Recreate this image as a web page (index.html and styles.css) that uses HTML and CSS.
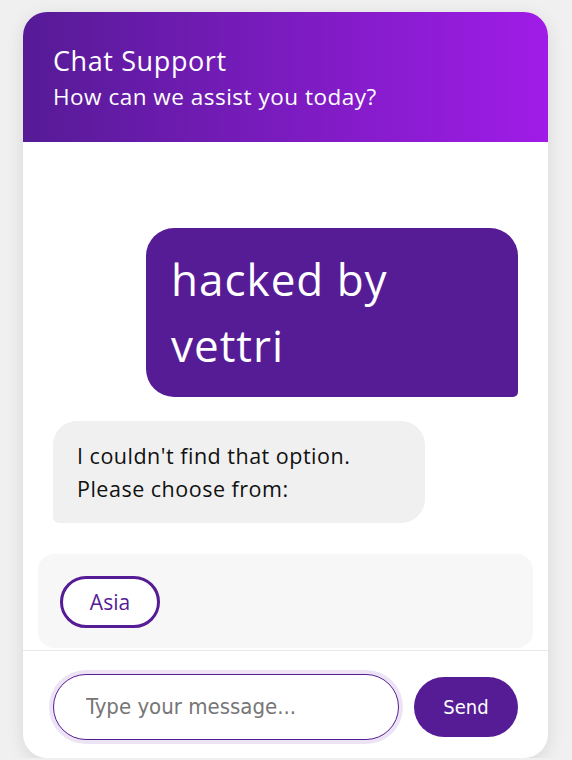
FILE: index.html
```html
<!DOCTYPE html>
<html lang="en">
<head>
<meta charset="utf-8">
<title>Chat Support</title>
<link rel="stylesheet" href="styles.css">
</head>
<body>
<div class="chat">
  <header class="chat-header">
    <h1 class="title">Chat Support</h1>
    <p class="subtitle">How can we assist you today?</p>
  </header>
  <div class="messages">
    <div class="msg user">hacked by vettri</div>
    <div class="msg bot">I couldn't find that option. Please choose from:</div>
  </div>
  <div class="options">
    <button class="option">Asia</button>
  </div>
  <div class="composer">
    <input class="input" type="text" placeholder="Type your message...">
    <button class="send">Send</button>
  </div>
</div>
</body>
</html>
```
FILE: styles.css
```css
* { box-sizing: border-box; }
html, body { margin: 0; padding: 0; }
body {
  background: #f0f0f0;
  padding-top: 12px;
  font-family: "Open Sans", "Noto Sans", sans-serif;
}
.chat {
  width: 525px;
  height: 746px;
  margin: 0 0 0 23px;
  background: #fff;
  border-radius: 24px;
  overflow: hidden;
  display: flex;
  flex-direction: column;
  box-shadow: 0 4px 18px rgba(0,0,0,0.10);
}
.chat-header {
  height: 130px;
  flex: none;
  padding: 31px 30px 0;
  color: #fff;
  background: linear-gradient(90deg, #561b96 0%, #a01ce8 100%);
}
.title {
  margin: 0;
  font-size: 27px;
  font-weight: 400;
  letter-spacing: 0.6px;
  line-height: 36px;
}
.subtitle {
  margin: 0;
  font-size: 22.5px;
  letter-spacing: 0.5px;
  line-height: 35px;
}
.messages {
  flex: 1;
  display: flex;
  flex-direction: column;
  justify-content: flex-end;
  gap: 24px;
  padding: 30px 30px 31px;
}
.msg {
  width: 80%;
}
.user {
  align-self: flex-end;
  background: #561c96;
  color: #fff;
  font-size: 44px;
  letter-spacing: 1px;
  line-height: 66px;
  padding: 18px 25px 19px;
  border-radius: 28px 28px 5px 28px;
}
.bot {
  align-self: flex-start;
  background: #f0f0f0;
  color: #111;
  font-size: 21.5px;
  letter-spacing: 0.5px;
  line-height: 33px;
  padding: 18px 24px 18px;
  border-radius: 24px 24px 24px 6px;
}
.options {
  flex: none;
  margin: 0 15px 2px;
  height: 94px;
  padding: 22px;
  background: #f7f7f7;
  border-radius: 16px;
  display: flex;
  align-items: flex-start;
}
.option {
  height: 52px;
  width: 100px;
  padding: 0;
  border: 3px solid #561c96;
  border-radius: 26px;
  background: #fff;
  color: #561c96;
  font-family: "Open Sans", "Noto Sans", sans-serif;
  font-size: 21px;
}
.composer {
  flex: none;
  border-top: 1px solid #e8e8e8;
  display: flex;
  align-items: center;
  gap: 15px;
  padding: 4px 30px 0;
  height: 108px;
}
.input {
  flex: 1;
  min-width: 0;
  height: 66px;
  border: 1px solid #561c96;
  border-radius: 33px;
  padding: 0 32px;
  font-family: "DejaVu Sans Condensed", "Liberation Sans", sans-serif;
  font-size: 22px;
  color: #222;
  outline: none;
  box-shadow: 0 0 0 4px #ece4f4;
}
.input::placeholder { color: #767676; }
.send {
  flex: none;
  width: 104px;
  height: 60px;
  border: none;
  border-radius: 30px;
  background: #561c96;
  color: #fff;
  font-family: "DejaVu Sans Condensed", "Liberation Sans", sans-serif;
  font-size: 20px;
}
```
